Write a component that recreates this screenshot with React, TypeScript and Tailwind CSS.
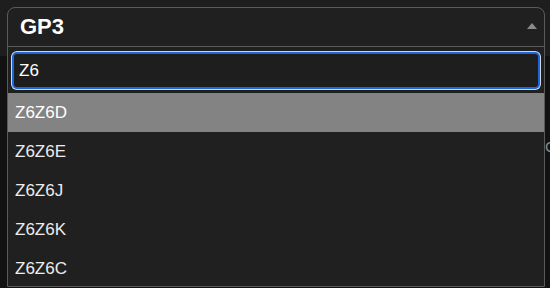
import React from 'react';

const OPTIONS = ['Z6Z6D', 'Z6Z6E', 'Z6Z6J', 'Z6Z6K', 'Z6Z6C'];

export default function App() {
  const active = 0;

  return (
    <div className="relative w-[550px] h-[288px] overflow-hidden bg-[#121212] font-['Liberation_Sans',Arial,sans-serif]">
      {/* page behind the open select */}
      <div className="h-[56px] bg-[#1e1e1e]" />
      <span className="absolute left-[545px] top-[136px] text-[15px] text-[#8a8a8a]">C</span>

      <div className="absolute left-[7px] top-[7px] w-[538px] h-[280px] flex flex-col overflow-hidden rounded-t-lg border border-[#5a5a5a] bg-[#202020]">
        <div className="flex h-[39px] shrink-0 items-center justify-between border-b border-[#5a5a5a] pl-[12px] pr-[7px]">
          <span className="text-[22px] font-bold leading-none text-white">GP3</span>
          <svg width="10" height="6" viewBox="0 0 10 6" className="mb-[2px]">
            <path d="M5 0L10 6H0Z" fill="#8a8a8a" />
          </svg>
        </div>

        <div className="shrink-0 px-[4px] pt-[5px] pb-[4px]">
          <div className="flex h-[37px] items-center rounded-[5px] border-2 border-[#1d66dc] bg-[#1e1e1e] pl-[5px] ring-1 ring-[#cfd8e6]">
            <span className="text-[17px] text-white">Z6</span>
          </div>
        </div>

        <ul className="flex flex-col">
          {OPTIONS.map((opt, i) => (
            <li
              key={opt}
              className={`flex h-[39px] shrink-0 items-center pl-[7px] text-[17px] ${
                i === active ? 'bg-[#838383] text-white' : 'text-[#ececec]'
              }`}
            >
              {opt}
            </li>
          ))}
        </ul>
      </div>
    </div>
  );
}
